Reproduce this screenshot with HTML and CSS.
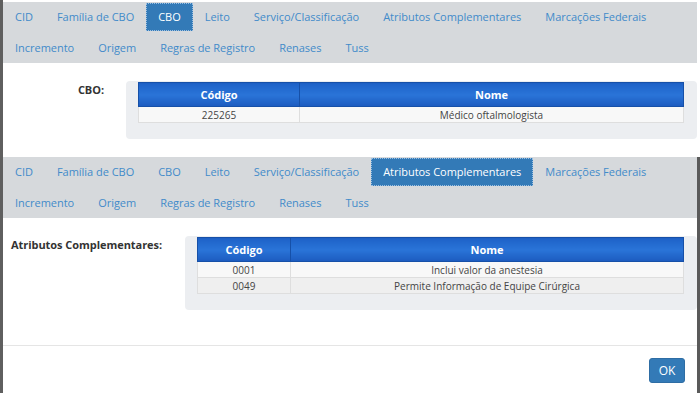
FILE: index.html
```html
<!DOCTYPE html>
<html>
<head>
<meta charset="utf-8">
<link rel="stylesheet" href="styles.css">
</head>
<body>
<div class="page">
  <section class="panel panel-top">
    <nav class="tabs">
      <a class="tab">CID</a>
      <a class="tab">Família de CBO</a>
      <a class="tab active">CBO</a>
      <a class="tab">Leito</a>
      <a class="tab">Serviço/Classificação</a>
      <a class="tab">Atributos Complementares</a>
      <a class="tab">Marcações Federais</a>
      <a class="tab">Incremento</a>
      <a class="tab">Origem</a>
      <a class="tab">Regras de Registro</a>
      <a class="tab">Renases</a>
      <a class="tab">Tuss</a>
    </nav>
    <div class="field field-cbo">
      <div class="label">CBO:</div>
      <div class="box">
        <table class="grid grid-cbo">
          <thead><tr><th class="c1">Código</th><th>Nome</th></tr></thead>
          <tbody>
            <tr><td>225265</td><td>Médico oftalmologista</td></tr>
          </tbody>
        </table>
      </div>
    </div>
  </section>
  <section class="panel panel-bottom">
    <nav class="tabs">
      <a class="tab">CID</a>
      <a class="tab">Família de CBO</a>
      <a class="tab">CBO</a>
      <a class="tab">Leito</a>
      <a class="tab">Serviço/Classificação</a>
      <a class="tab active">Atributos Complementares</a>
      <a class="tab">Marcações Federais</a>
      <a class="tab">Incremento</a>
      <a class="tab">Origem</a>
      <a class="tab">Regras de Registro</a>
      <a class="tab">Renases</a>
      <a class="tab">Tuss</a>
    </nav>
    <div class="field field-attr">
      <div class="label">Atributos Complementares:</div>
      <div class="box">
        <table class="grid grid-attr">
          <thead><tr><th class="c1">Código</th><th>Nome</th></tr></thead>
          <tbody>
            <tr><td>0001</td><td>Inclui valor da anestesia</td></tr>
            <tr class="alt"><td>0049</td><td>Permite Informação de Equipe Cirúrgica</td></tr>
          </tbody>
        </table>
      </div>
    </div>
    <footer class="footer">
      <button class="ok">OK</button>
    </footer>
  </section>
</div>
</body>
</html>
```

FILE: styles.css
```css
html, body {
  margin: 0;
  padding: 0;
  background: #ffffff;
}
body {
  width: 700px;
  height: 393px;
  overflow: hidden;
  font-family: "Open Sans", "Liberation Sans", sans-serif;
  font-size: 11px;
}
.page {
  height: 393px;
  border-left: 3px solid #5f5f5f;
  box-sizing: border-box;
}
.panel-top {
  height: 157px;
  padding-top: 2px;
  padding-right: 3px;
  box-sizing: border-box;
}
.panel-bottom {
  height: 236px;
  border-right: 3px solid #5a5a5a;
  box-sizing: border-box;
}
.tabs {
  background: #d6d9dc;
  display: flex;
  flex-wrap: wrap;
  row-gap: 3px;
  padding: 1px 0;
  height: 61px;
  box-sizing: border-box;
  align-content: flex-start;
}
.tab {
  height: 28px;
  line-height: 28px;
  padding: 0 12px;
  color: #428bca;
  white-space: nowrap;
  letter-spacing: -0.025px;
  box-sizing: border-box;
}
.tab.active {
  background: #337ab7;
  color: #ffffff;
  outline: 1px dotted #9cc0e2;
  outline-offset: -1px;
}
.field {
  display: flex;
  margin-top: 18px;
}
.label {
  font-weight: bold;
  color: #333333;
  padding-top: 1px;
  letter-spacing: -0.05px;
  box-sizing: border-box;
}
.field-cbo .label {
  width: 123px;
  text-align: right;
  padding-right: 22px;
}
.field-attr .label {
  width: 182px;
  padding-left: 8px;
}
.box {
  flex: 1;
  background: #eceef1;
  border-radius: 4px;
  padding: 1px 13px 16px 12px;
}
.grid {
  width: 100%;
  border-collapse: collapse;
  font-size: 10px;
}
.grid th {
  height: 23px;
  background: linear-gradient(#1e62c8, #2a74d8 50%, #1c5bbf);
  color: #ffffff;
  font-weight: bold;
  font-size: 11px;
  border: 1px solid #1650a8;
  padding: 0;
}
.grid td {
  height: 15px;
  text-align: center;
  color: #444444;
  background: #f8f8f8;
  border: 1px solid #dedede;
  padding: 0;
}
.grid tr.alt td {
  background: #efefef;
}
.grid-cbo .c1 { width: 160px; }
.grid-attr .c1 { width: 92px; }
.footer {
  margin-top: 35px;
  border-top: 1px solid #e5e5e5;
  display: flex;
  justify-content: flex-end;
  padding: 12px 12px 0 0;
}
.ok {
  width: 36px;
  height: 25px;
  background: #337ab7;
  border: 1px solid #2e6da4;
  border-radius: 3px;
  color: #ffffff;
  font-family: "Open Sans", "Liberation Sans", sans-serif;
  font-size: 12px;
  padding: 0;
}
```
